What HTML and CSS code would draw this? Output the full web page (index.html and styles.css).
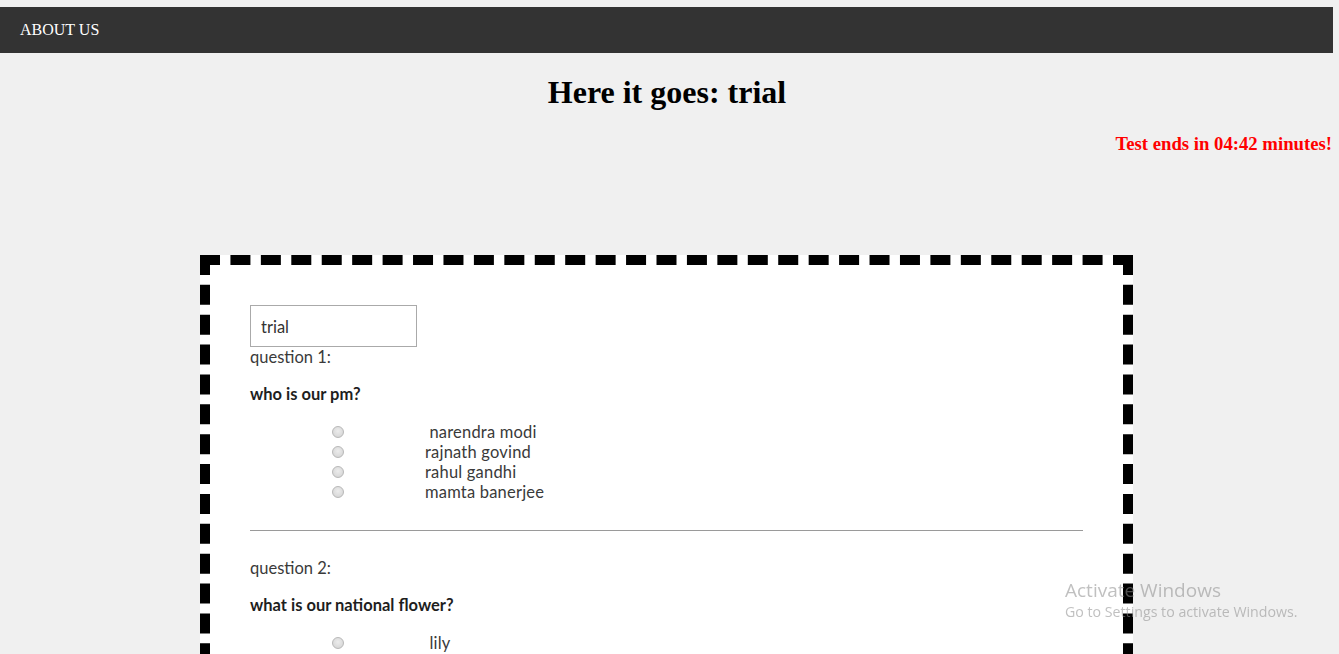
FILE: index.html
```html
<!DOCTYPE html>
<html>
<head>
<meta charset="utf-8">
<title>trial</title>
<link rel="stylesheet" href="styles.css">
</head>
<body>
<nav class="navbar"><a class="nav-link" href="#">ABOUT US</a></nav>
<h1 class="title">Here it goes: trial</h1>
<h3 class="timer">Test ends in 04:42 minutes!</h3>
<div class="quiz">
  <input class="name-input" type="text" value="trial">
  <div class="q-label">question 1:</div>
  <p class="q-text">who is our pm?</p>
  <div class="options">
    <label class="option"><input type="radio" name="q1"><span class="opt-text">&nbsp;narendra modi</span></label>
    <label class="option"><input type="radio" name="q1"><span class="opt-text">rajnath govind</span></label>
    <label class="option"><input type="radio" name="q1"><span class="opt-text">rahul gandhi</span></label>
    <label class="option"><input type="radio" name="q1"><span class="opt-text">mamta banerjee</span></label>
  </div>
  <hr class="divider">
  <div class="q-label q2">question 2:</div>
  <p class="q-text">what is our national flower?</p>
  <div class="options">
    <label class="option"><input type="radio" name="q2"><span class="opt-text">&nbsp;lily</span></label>
    <label class="option"><input type="radio" name="q2"><span class="opt-text">lotus</span></label>
  </div>
</div>
<div class="watermark">
  <div class="wm-title">Activate Windows</div>
  <div class="wm-sub">Go to Settings to activate Windows.</div>
</div>
</body>
</html>
```
FILE: styles.css
```css
html, body {
  margin: 0;
  padding: 0;
  background: #f0f0f0;
  overflow: hidden;
  height: 654px;
}
body {
  font-family: "Liberation Serif", "Times New Roman", serif;
}
.navbar {
  margin: 7px 6px 0 0;
  height: 46px;
  background: #333333;
  display: flex;
  align-items: center;
  padding-left: 20px;
}
.nav-link {
  color: #ffffff;
  text-decoration: none;
  font-size: 16px;
  line-height: 20px;
  padding-bottom: 1px;
}
.title {
  margin: 19px 0 0 0;
  padding-right: 5px;
  font-size: 32px;
  line-height: 40px;
  font-weight: bold;
  text-align: center;
  color: #000;
}
.timer {
  margin: 20px 7px 0 0;
  font-size: 18.72px;
  line-height: 24px;
  font-weight: bold;
  text-align: right;
  color: #ff0000;
}
.quiz {
  margin: 99px 0 0 200px;
  border: 10px dashed #000;
  background: #ffffff;
  padding: 40px;
  box-sizing: content-box;
  width: 833px;
  font-family: "Lato", "Open Sans", sans-serif;
  color: #333;
  font-size: 16.5px;
}
.name-input {
  display: block;
  box-sizing: border-box;
  width: 167px;
  height: 42px;
  margin: 0;
  border: 1px solid #aaaaaa;
  padding: 1px 0 0 10px;
  font-family: "Lato", "Open Sans", sans-serif;
  font-size: 16.5px;
  color: #333;
  background: #fff;
  outline: none;
}
.q-label {
  line-height: 20px;
  font-weight: 400;
  color: #3a3a3a;
}
.q-label.q2 {
  margin-top: 27px;
}
.q-text {
  margin: 17px 0 18px 0;
  line-height: 20px;
  font-weight: bold;
  color: #1e1e1e;
}
.options {
  display: flex;
  flex-direction: column;
}
.option {
  display: flex;
  align-items: center;
  height: 20px;
  padding-left: 82px;
  font-weight: 400;
}
.option input {
  -webkit-appearance: none;
  appearance: none;
  width: 12px;
  height: 12px;
  margin: 0;
  border-radius: 50%;
  border: 1px solid #b8b8b8;
  background: radial-gradient(circle at 50% 40%, #ececec 0%, #dcdcdc 60%, #cfcfcf 100%);
  box-sizing: border-box;
  flex: none;
  position: relative;
  top: 0;
}
.opt-text {
  margin-left: 81px;
  line-height: 20px;
  color: #3a3a3a;
  letter-spacing: 0.2px;
}
.divider {
  margin: 28px 0 0 0;
  border: 0;
  height: 1px;
  background: #9a9a9a;
}
.watermark {
  position: fixed;
  left: 1065px;
  top: 577px;
  font-family: "Open Sans", "Noto Sans", sans-serif;
  color: rgba(140, 140, 140, 0.55);
  pointer-events: none;
}
.wm-title {
  font-size: 19px;
  line-height: 26px;
}
.wm-sub {
  font-size: 14.2px;
  line-height: 18px;
}
```
